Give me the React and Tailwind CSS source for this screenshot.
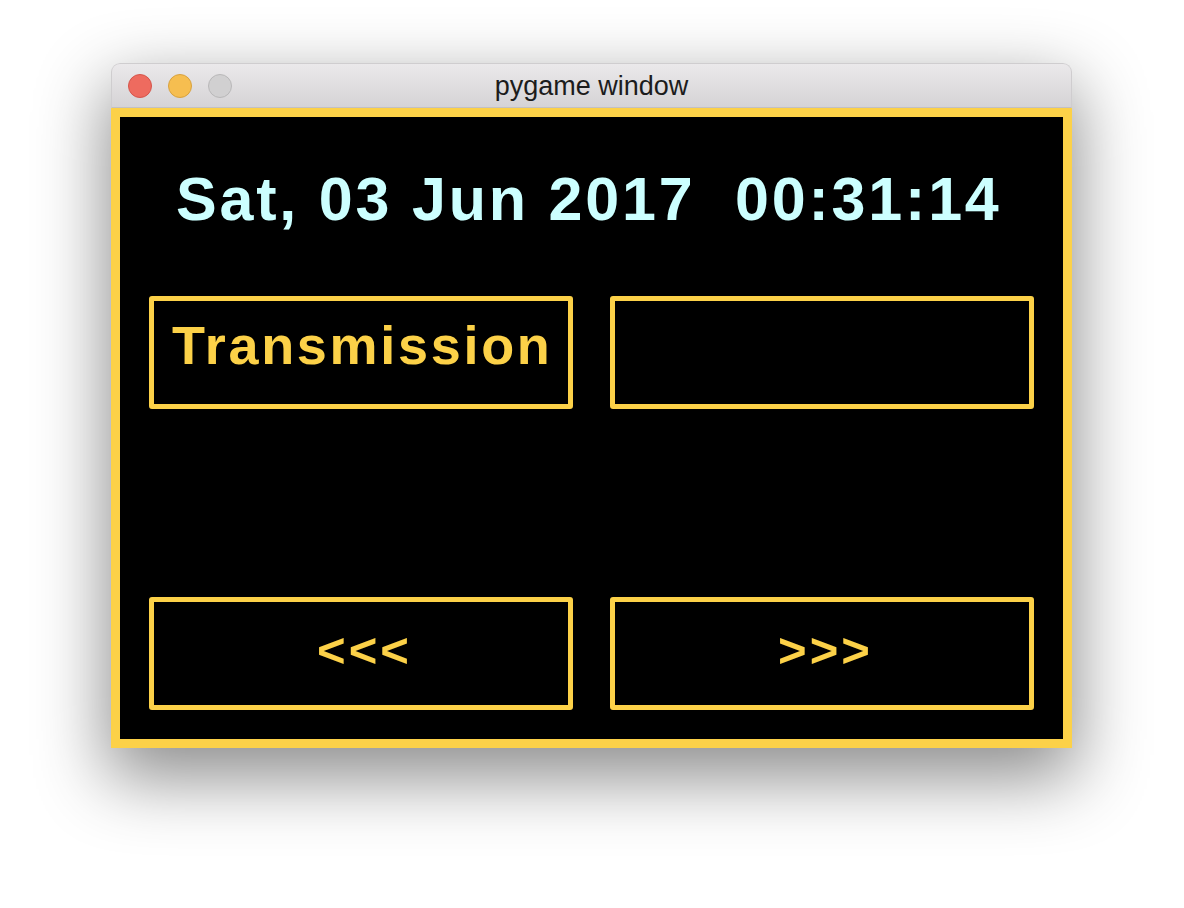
import React from 'react';

// pygame window mockup: clock + two rows of yellow outlined buttons
const yellow = 'border-[#fcd148]';

function TrafficLights() {
    return (
        <div className="flex items-center gap-4 pl-[16px]">
            <span className="w-6 h-6 rounded-full bg-[#ee6b5f] border border-[#d5554b]" />
            <span className="w-6 h-6 rounded-full bg-[#f6be50] border border-[#d8a23f]" />
            <span className="w-6 h-6 rounded-full bg-[#d1d0d1] border border-[#b9b8b9]" />
        </div>
    );
}

function Panel({ children, className = '' }) {
    return (
        <div className={`h-[113px] border-[5px] ${yellow} rounded-[3px] ${className}`}>
            {children}
        </div>
    );
}

export default function App() {
    return (
        <div className="min-h-[908px] bg-white pt-[63px] pl-[111px]" style={{ fontFamily: '"Liberation Sans", Arial, sans-serif' }}>
            <div className="w-[961px] rounded-t-[9px] shadow-[0_26px_70px_4px_rgba(0,0,0,0.45)]">
                {/* Title bar */}
                <div className="relative h-[45px] rounded-t-[9px] border border-b-[#c2c0c2] border-[#cfcdcf] bg-gradient-to-b from-[#ebe9eb] to-[#d5d3d5] flex items-center">
                    <TrafficLights />
                    <div className="absolute inset-0 flex items-center justify-center text-[27px] text-[#1c1c1c] pt-[2px]">
                        pygame window
                    </div>
                </div>

                {/* pygame surface */}
                <div className={`h-[640px] bg-black border-[9px] ${yellow} flex flex-col`}>
                    <div className="pt-[52px] pl-[56px] text-[61px] leading-[61px] font-bold text-[#ccffff] tracking-[2.8px] whitespace-pre">
                        Sat, 03 Jun 2017  00:31:14
                    </div>

                    <div className="mt-[66px] px-[29px] grid grid-cols-2 gap-x-[37px]">
                        <Panel className="pt-[17px] pl-[18px]">
                            <div className="text-[54px] leading-[54px] font-bold text-[#fcd148] tracking-[2.7px]">
                                Transmission
                            </div>
                        </Panel>
                        <Panel />
                    </div>

                    <div className="mt-[188px] px-[29px] grid grid-cols-2 gap-x-[37px]">
                        <Panel className="flex items-center justify-center pb-[6px]">
                            <span className="text-[49px] leading-none font-bold text-[#fcd148] tracking-[3px] pl-[7px]">&lt;&lt;&lt;</span>
                        </Panel>
                        <Panel className="flex items-center justify-center pb-[6px]">
                            <span className="text-[49px] leading-none font-bold text-[#fcd148] tracking-[3px] pl-[7px]">&gt;&gt;&gt;</span>
                        </Panel>
                    </div>
                </div>
            </div>
        </div>
    );
}
